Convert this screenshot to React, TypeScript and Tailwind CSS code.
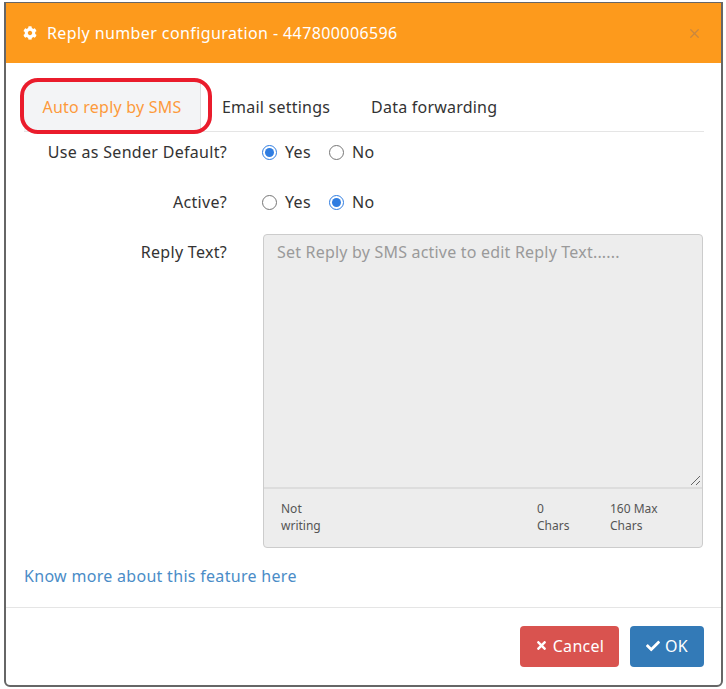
import React from 'react';
import { FaCog, FaTimes, FaCheck } from 'react-icons/fa';
import { X } from 'lucide-react';

function Radio({ on }: { on?: boolean }) {
  return (
    <span
      className={`inline-flex w-[15px] h-[15px] rounded-full items-center justify-center border bg-white ${
        on ? 'border-[#2f7de1]' : 'border-[#767676]'
      }`}
    >
      {on && <span className="w-[9px] h-[9px] rounded-full bg-[#2f7de1]" />}
    </span>
  );
}

function YesNo({ yes }: { yes?: boolean }) {
  return (
    <div className="flex items-center text-[16px] text-[#333]">
      <Radio on={yes} />
      <span className="ml-[8px] w-[44px]">Yes</span>
      <Radio on={!yes} />
      <span className="ml-[8px]">No</span>
    </div>
  );
}

function Row({ label, children, className }: { label: string; children: React.ReactNode; className?: string }) {
  return (
    <div className={`flex ${className ?? ''}`}>
      <div className="w-[203px] text-right text-[16px] text-[#333] leading-[24px]">{label}</div>
      <div className="ml-[35px] min-h-[24px] flex items-center">{children}</div>
    </div>
  );
}

export default function App() {
  return (
    <div className="w-[726px] h-[689px] bg-white pl-[4px] pr-[3px] pt-[2px] pb-[2px] font-['Noto_Sans',sans-serif] tracking-[0.3px]">
      <div className="h-[685px] border-2 border-t border-[#666] rounded-b-[6px] bg-white flex flex-col overflow-hidden">
        <div className="h-[60px] shrink-0 bg-[#fd9a1c] flex items-center pl-[17px] pr-[19px] text-white">
          <FaCog size={14} />
          <span className="ml-[10px] text-[16px] tracking-[0.4px]">Reply number configuration - 447800006596</span>
          <X size={15} strokeWidth={2} className="ml-auto text-[#c9873f]" />
        </div>

        <div className="relative flex-1 px-[18px] flex flex-col">
          <div className="relative mt-[19px] h-[50px] flex border-b border-[#e5e5e5] mr-[-1px] text-[16px] leading-[24px] tracking-[0.22px]">
            <div className="w-[177px] h-[49px] bg-[#f3f4f6] border-r border-[#ddd] flex items-center justify-center text-[#fd9a3c]">
              Auto reply by SMS
            </div>
            <div className="ml-[21px] h-[49px] flex items-center text-[#333]">Email settings</div>
            <div className="ml-[41px] h-[49px] flex items-center text-[#333]">Data forwarding</div>
            <div className="absolute left-[-4px] top-[-4px] w-[192px] h-[56px] border-[4px] border-[#ea1c2c] rounded-[18px]" />
          </div>

          <Row label="Use as Sender Default?" className="mt-[8px]">
            <YesNo yes />
          </Row>
          <Row label="Active?" className="mt-[26px]">
            <YesNo />
          </Row>
          <Row label="Reply Text?" className="mt-[26px]">
            <div />
          </Row>
          <div className="ml-[239px] mt-[-30px] w-[440px] h-[314px] rounded-[4px] border border-[#ccc] bg-[#ededed] flex flex-col overflow-hidden">
            <div className="relative h-[254px] border-b-2 border-[#ddd] px-[13px] pt-[5px] text-[16px] leading-[24px] tracking-[0.2px] text-[#9a9a9a]">
              Set Reply by SMS active to edit Reply Text......
              <svg className="absolute right-[1px] bottom-[1px]" width="11" height="11" viewBox="0 0 11 11">
                <path d="M1 10 L10 1 M6 10 L10 6" stroke="#666" strokeWidth="1" />
              </svg>
            </div>
            <div className="flex-1 flex pt-[11px] text-[12px] leading-[17px] tracking-normal text-[#555]">
              <div className="ml-[17px] w-[256px]">
                Not
                <br />
                writing
              </div>
              <div className="w-[73px]">
                0
                <br />
                Chars
              </div>
              <div>
                160 Max
                <br />
                Chars
              </div>
            </div>
          </div>

          <a className="mt-[16px] text-[16px] leading-[24px] text-[#4a8cc7]">Know more about this feature here</a>
        </div>

        <div className="h-[78px] shrink-0 border-t border-[#e5e5e5] flex justify-end items-start pt-[18px] pr-[17px] gap-[11px] text-white text-[16px]">
          <button className="w-[99px] h-[41px] pb-[2px] rounded-[4px] bg-[#d9534f] flex items-center justify-center gap-[5px]">
            <FaTimes size={13} />
            Cancel
          </button>
          <button className="w-[74px] h-[41px] pb-[2px] rounded-[4px] bg-[#337ab7] flex items-center justify-center gap-[5px]">
            <FaCheck size={14} />
            OK
          </button>
        </div>
      </div>
    </div>
  );
}
